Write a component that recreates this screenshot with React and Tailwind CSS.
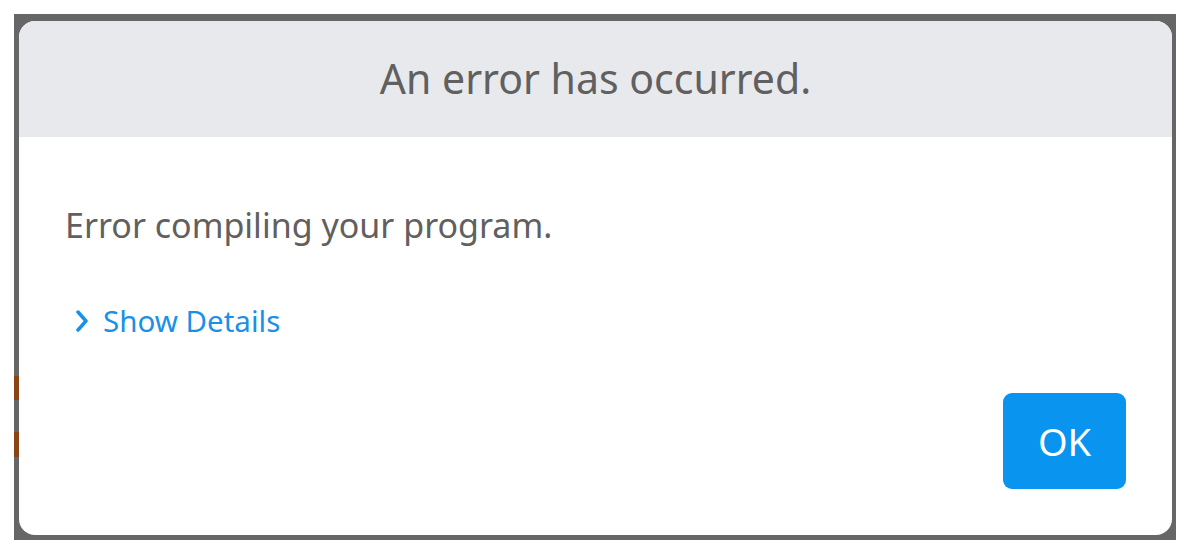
export default function App() {
  const font = { fontFamily: '"Noto Sans", "Open Sans", sans-serif' };
  return (
    <div className="w-[1194px] h-[556px] bg-white pt-[14px] pl-[14px] pr-[18px] pb-[16px]" style={font}>
      <div className="relative h-full w-full bg-[#666666] pt-[7px] pl-[5px] pr-[4px] pb-[5px]">
        <div className="absolute left-0 top-[362px] w-[5px] h-[24px] bg-[#8a4516]" />
        <div className="absolute left-0 top-[418px] w-[5px] h-[25px] bg-[#8a4516]" />
        <div className="h-full w-full bg-white rounded-[16px] overflow-hidden flex flex-col">
          <div className="h-[116px] shrink-0 bg-[#e8e9ed] flex items-center justify-center">
            <span className="text-[41px] leading-none text-[#606060] mb-[2px]">An error has occurred.</span>
          </div>
          <div className="flex-1 flex flex-col px-[46px]">
            <div className="mt-[71px] text-[34px] leading-none text-[#606060]">Error compiling your program.</div>
            <div className="mt-[64px] flex items-center gap-[15px] text-[#1a90e8]">
              <svg width="12" height="22" viewBox="0 0 12 22" className="ml-[11px]">
                <path d="M2 2 L10 11 L2 20" fill="none" stroke="#1a90e8" strokeWidth="3.5" strokeLinecap="round" strokeLinejoin="round" />
              </svg>
              <span className="text-[29.5px] leading-none">Show Details</span>
            </div>
            <div className="flex-1 flex items-end justify-end pb-[46px]">
              <button className="w-[123px] h-[96px] rounded-[9px] bg-[#0994f0] text-white text-[38px] leading-none flex items-center justify-center">
                OK
              </button>
            </div>
          </div>
        </div>
      </div>
    </div>
  );
}
